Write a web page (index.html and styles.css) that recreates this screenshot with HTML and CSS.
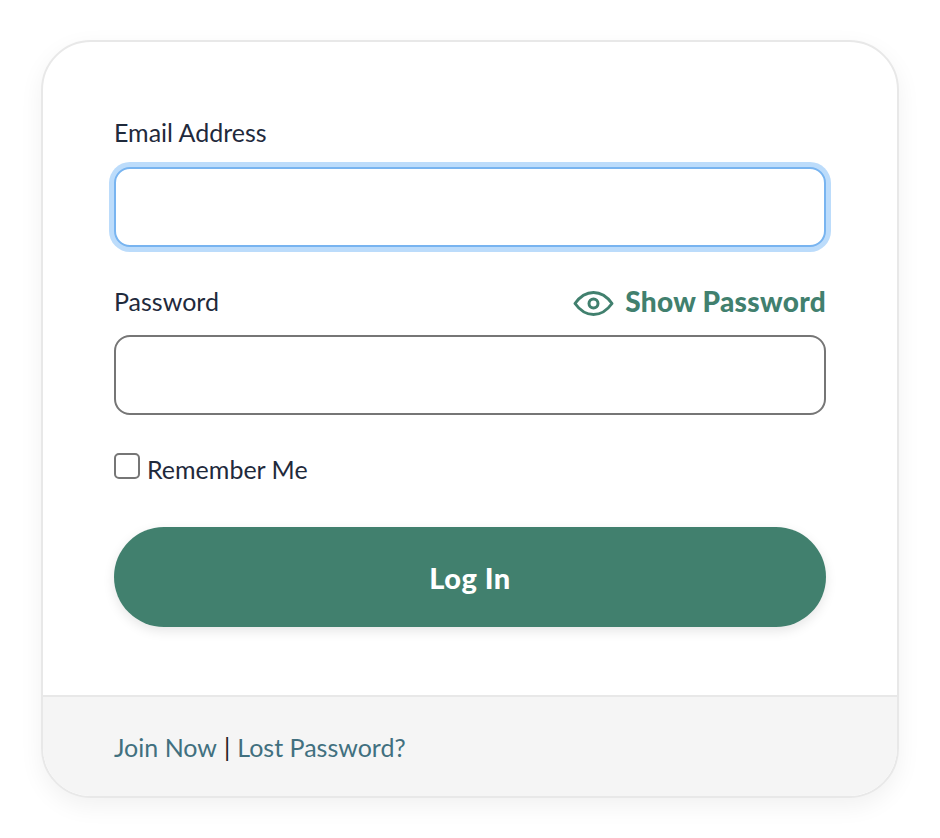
FILE: index.html
```html
<!DOCTYPE html>
<html lang="en">
<head>
    <meta charset="UTF-8">
    <meta name="viewport" content="width=device-width, initial-scale=1.0">
    <title>Log In</title>
    <link rel="stylesheet" href="styles.css">
</head>
<body>
    <div class="card">
        <form class="login-form">
            <label class="field-label email-label" for="email">Email Address</label>
            <input class="text-input focused" type="text" id="email">

            <div class="password-row">
                <label class="field-label" for="password">Password</label>
                <a class="show-password" href="#">
                    <svg class="eye-icon" width="41" height="30" viewBox="0 0 41 30" fill="none" stroke="#41806e" stroke-width="3">
                        <path d="M2 15.5C7 8.5 13 4.5 20.5 4.5S34 8.5 39 15.5C34 22.5 28 26.500 20.500 26.500S7 22.500 2 15.500Z" stroke-linejoin="round"/>
                        <circle cx="20.500" cy="15.500" r="4.500"/>
                    </svg>
                    Show Password
                </a>
            </div>
            <input class="text-input" type="password" id="password">

            <label class="remember">
                <span class="checkbox"></span>
                Remember Me
            </label>

            <button class="btn" type="button">Log In</button>
        </form>
        <div class="card-footer">
            <a href="#">Join Now</a> | <a href="#">Lost Password?</a>
        </div>
    </div>
</body>
</html>
```

FILE: styles.css
```css
* { box-sizing: border-box; }
body { background-color: #fff; color: #1f2a3c; font-family: 'Lato', sans-serif; font-size: 25px; margin: 0; padding: 40px 41px; }
.card { width: 858px; height: 758px; display: flex; flex-direction: column; background-color: #fff; border: 2px solid #e8e8e8; border-radius: 50px; box-shadow: 0 8px 24px rgba(0, 0, 0, 0.06); overflow: hidden; }
.login-form { flex: 1; padding: 72px 71px 0 71px; display: flex; flex-direction: column; }
.field-label { display: block; line-height: 36px; }
.email-label { margin-bottom: 17px; }
.text-input { display: block; width: 100%; height: 80px; background-color: #fff; border: 2px solid #767676; border-radius: 16px; outline: none; }
.text-input.focused { border-color: #78b4f0; box-shadow: 0 0 0 5px #bcdcfb; }
.password-row { display: flex; justify-content: space-between; align-items: center; margin-top: 36px; margin-bottom: 16px; height: 36px; }
.show-password { display: flex; align-items: center; gap: 11px; color: #41806e; font-weight: 900; font-size: 28px; text-decoration: none; letter-spacing: 0.3px; }
.eye-icon { margin-top: 3px; }
.remember { display: flex; align-items: center; gap: 7px; margin-top: 36px; line-height: 36px; }
.checkbox { width: 26px; height: 26px; margin-top: -7px; border: 2px solid #767676; border-radius: 5px; background-color: #fff; }
.btn { margin-top: 40px; height: 100px; width: 100%; border: none; border-radius: 50px; background-color: #41806e; color: #fff; font-family: inherit; font-size: 29px; font-weight: 900; letter-spacing: 0.5px; box-shadow: 0 4px 12px rgba(0, 0, 0, 0.1); }
.card-footer { height: 101px; padding: 0 71px; display: flex; align-items: center; gap: 7px; background-color: #f5f5f5; border-top: 2px solid #e8e8e8; color: #222; }
.card-footer a { color: #41707f; text-decoration: none; }
```
